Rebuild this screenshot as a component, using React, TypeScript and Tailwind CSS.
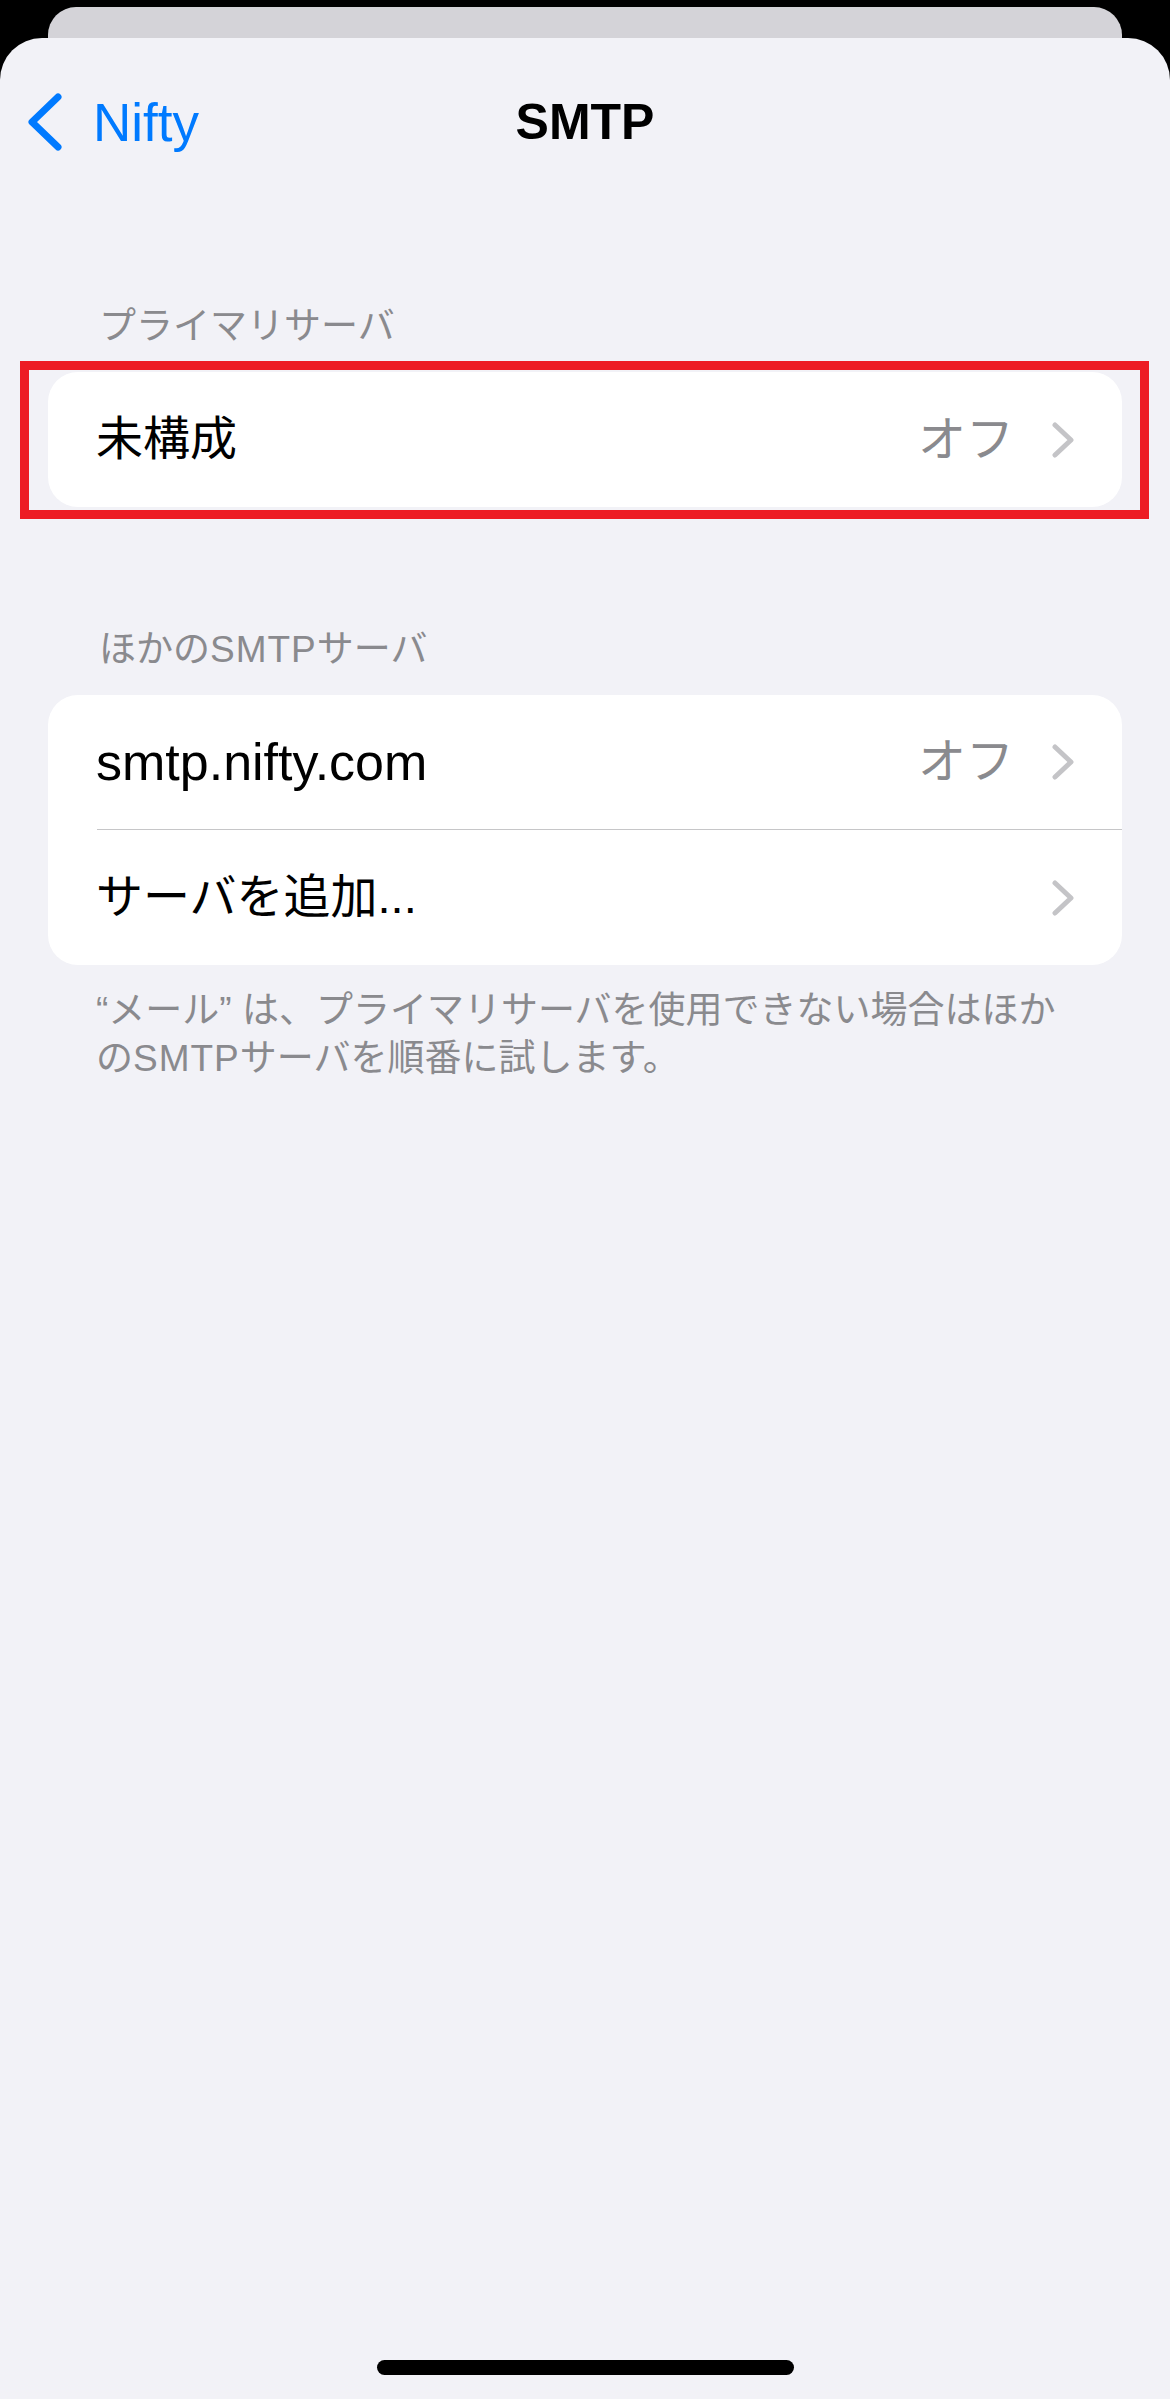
import React from "react";

const font = "font-['Liberation_Sans','Noto_Sans_CJK_JP',sans-serif]";

function Chevron() {
  return (
    <svg width="24" height="36" viewBox="0 0 24 36" fill="none" className="shrink-0">
      <path d="M4 3 L20 18 L4 33" stroke="#c4c4c7" strokeWidth="5" strokeLinecap="round" strokeLinejoin="round" />
    </svg>
  );
}

function Row({ label, value, size = "text-[47px]", height = "h-[135px]" }: { label: string; value?: string; size?: string; height?: string }) {
  return (
    <div className={`flex items-center ${height} pl-[48px] pr-[47px]`}>
      <span className={`flex-1 ${size} text-black whitespace-nowrap`}>{label}</span>
      {value && <span className="text-[48px] text-[#8a8a8e] mr-[37px]">{value}</span>}
      <Chevron />
    </div>
  );
}

export default function App() {
  return (
    <div className={`h-[2399px] bg-black flex flex-col overflow-hidden ${font}`}>
      {/* card behind the sheet */}
      <div className="mx-[48px] mt-[7px] h-[31px] shrink-0 bg-[#d4d3d8] rounded-t-[28px]" />

      <div className="flex-1 flex flex-col bg-[#f2f2f7] rounded-t-[42px]">
        {/* nav bar */}
        <div className="pt-[54px]">
          <div className="grid grid-cols-[1fr_auto_1fr] items-center h-[60px]">
            <div className="flex items-center pl-[26px]">
              <svg width="36" height="60" viewBox="0 0 36 60" fill="none">
                <path d="M32 5 L6 30 L32 55" stroke="#007aff" strokeWidth="7" strokeLinecap="round" strokeLinejoin="round" />
              </svg>
              <span className="ml-[31px] text-[53px] leading-none text-[#007aff]">Nifty</span>
            </div>
            <span className="text-[50px] leading-none font-bold text-black">SMTP</span>
            <div />
          </div>
        </div>

        {/* primary server */}
        <div className="mt-[153px] h-[44px] leading-[44px] pl-[99px] text-[37px] text-[#8a8a8e]">プライマリサーバ</div>
        <div className="relative mx-[48px] mt-[23px]">
          <div className="bg-white rounded-[30px]">
            <Row label="未構成" value="オフ" />
          </div>
          <div className="absolute top-[-11px] bottom-[-12px] left-[-28px] right-[-27px] border-[9px] border-[#ed1c24]" />
        </div>

        {/* other servers */}
        <div className="mt-[121px] h-[44px] leading-[44px] pl-[99px] text-[37px] text-[#8a8a8e]">
          ほかの<span className="tracking-[1px]">SMTP</span>サーバ
        </div>
        <div className="mx-[48px] mt-[23px] bg-white rounded-[30px] overflow-hidden">
          <Row label="smtp.nifty.com" value="オフ" size="text-[52px]" height="h-[134px]" />
          <div className="ml-[49px] h-px bg-[#c6c6c8]" />
          <Row label="サーバを追加..." />
        </div>
        <p className="pt-[22px] pl-[96px] text-[37px] leading-[48px] text-[#8a8a8e] whitespace-nowrap">
          “メール” は、プライマリサーバを使用できない場合はほか
          <br />
          の<span className="tracking-[1px]">SMTP</span>サーバを順番に試します。
        </p>

        {/* home indicator */}
        <div className="mt-auto mb-[24px] mx-auto w-[417px] h-[15px] rounded-full bg-black" />
      </div>
    </div>
  );
}
